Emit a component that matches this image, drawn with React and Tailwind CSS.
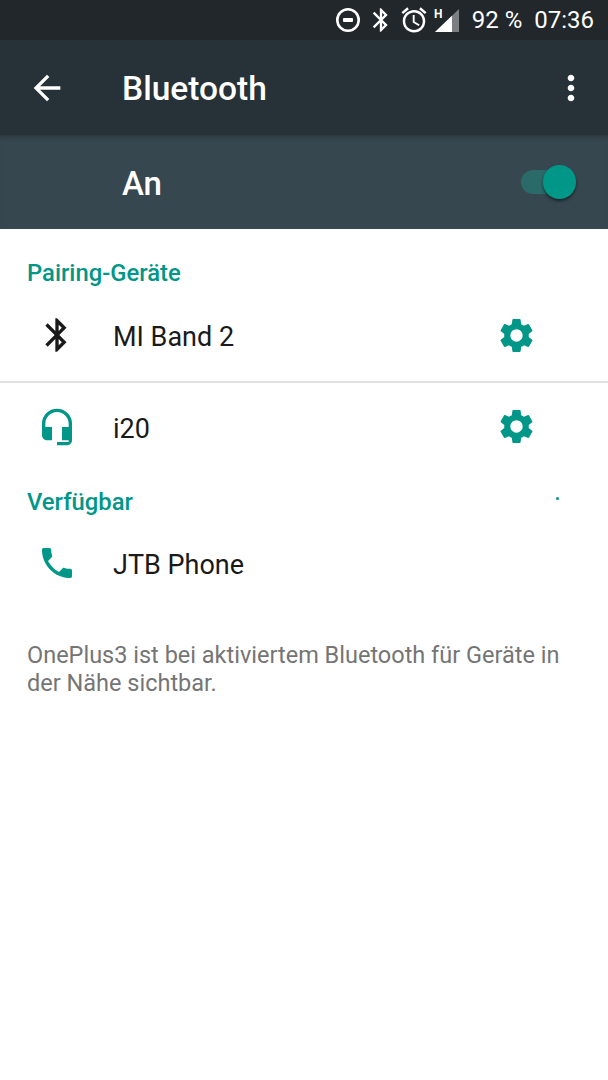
import React from "react";
import {
  MdAlarm,
  MdArrowBack,
  MdBluetooth,
  MdHeadsetMic,
  MdMoreVert,
  MdPhone,
  MdSettings,
} from "react-icons/md";

const DeviceRow = ({ icon, name, iconColor, gear, className }) => {
  return (
    <div className={`flex items-center ${className}`}>
      <div className={`w-[113px] pl-[37px] mb-[4px] shrink-0 ${iconColor}`}>{icon}</div>
      <div className="flex-1 text-[27px] leading-8 text-[#1a1a1a]">{name}</div>
      {gear && (
        <div className="w-[112px] mb-[4px] shrink-0 text-[#009688]">
          <MdSettings size={41} />
        </div>
      )}
    </div>
  );
};

const App = () => {
  return (
    <div
      className="relative w-[608px] h-[1080px] bg-white overflow-hidden"
      style={{ fontFamily: "Roboto, sans-serif" }}
    >
      {/* status bar */}
      <div className="h-10 bg-[#21272b] text-white flex items-center justify-end pr-[14px]">
        <svg width="26" height="26" viewBox="0 0 26 26" className="mr-[6px]">
          <circle cx="13" cy="13" r="10.7" fill="none" stroke="white" strokeWidth="2.6" />
          <rect x="8" y="11" width="10" height="4" rx="1" fill="white" />
        </svg>
        <MdBluetooth size={28} className="mr-[4px]" />
        <MdAlarm size={30} className="mr-[5px]" />
        <svg width="26" height="30" viewBox="0 0 26 30" className="mr-[12px]">
          <text x="0" y="13" fontSize="12" fontWeight="700" fill="white" fontFamily="Roboto, sans-serif">H</text>
          <path d="M1 27 L25 4 L25 27 Z" fill="#7c7f81" />
          <path d="M1 27 L18 10.7 L18 27 Z" fill="white" />
        </svg>
        <span className="text-[24px] leading-none mr-[12px]">92 %</span>
        <span className="text-[24px] leading-none">07:36</span>
      </div>

      {/* toolbar */}
      <div className="h-[95px] bg-[#263238] text-white flex items-center">
        <div className="w-[122px] pl-[27px] shrink-0">
          <MdArrowBack size={40} />
        </div>
        <div className="flex-1 pt-[2px] text-[33.5px] font-medium leading-10">Bluetooth</div>
        <div className="w-[57px] shrink-0">
          <MdMoreVert size={40} />
        </div>
      </div>

      {/* master switch */}
      <div className="relative h-[94px] bg-[#37474f] text-white flex items-center shadow-[inset_0_6px_6px_-5px_rgba(0,0,0,0.3)]">
        <div className="pl-[122px] pt-[4px] flex-1 text-[33px] font-medium leading-10">An</div>
        <div className="relative w-[54px] h-[24px] mr-[33px] rounded-full bg-[#2a6a68]">
          <div className="absolute -right-px -top-[5px] w-[33px] h-[34px] rounded-full bg-[#009688] shadow-[0_2px_3px_rgba(0,0,0,0.5)]"></div>
        </div>
      </div>

      {/* paired devices */}
      <div className="h-[29px] mt-[30px] pl-[27px] text-[23.8px] font-medium leading-[29px] text-[#009688]">
        Pairing-Geräte
      </div>
      <DeviceRow
        className="h-[93px] pt-[5px]"
        icon={<MdBluetooth size={40} />}
        iconColor="text-[#1a1a1a]"
        name="MI Band 2"
        gear
      />
      <div className="h-[2px] bg-[#dfe0e0]"></div>
      <DeviceRow
        className="h-[91px]"
        icon={<MdHeadsetMic size={40} />}
        iconColor="text-[#009688]"
        name="i20"
        gear
      />

      {/* available devices */}
      <div className="h-[29px] mt-[14px] pl-[27px] text-[23.8px] font-medium leading-[29px] text-[#009688]">
        Verfügbar
      </div>
      <DeviceRow
        className="h-[92px] mt-[2px]"
        icon={<MdPhone size={40} />}
        iconColor="text-[#009688]"
        name="JTB Phone"
      />

      <p className="mt-[30px] px-[27px] text-[23.5px] leading-[28px] text-[#757575]">
        OnePlus3 ist bei aktiviertem Bluetooth für Geräte in der Nähe sichtbar.
      </p>

      {/* spinner dot */}
      <div className="absolute left-[556px] top-[497px] w-[3px] h-[3px] rounded-full bg-[#009688]"></div>
    </div>
  );
};

export default App;
